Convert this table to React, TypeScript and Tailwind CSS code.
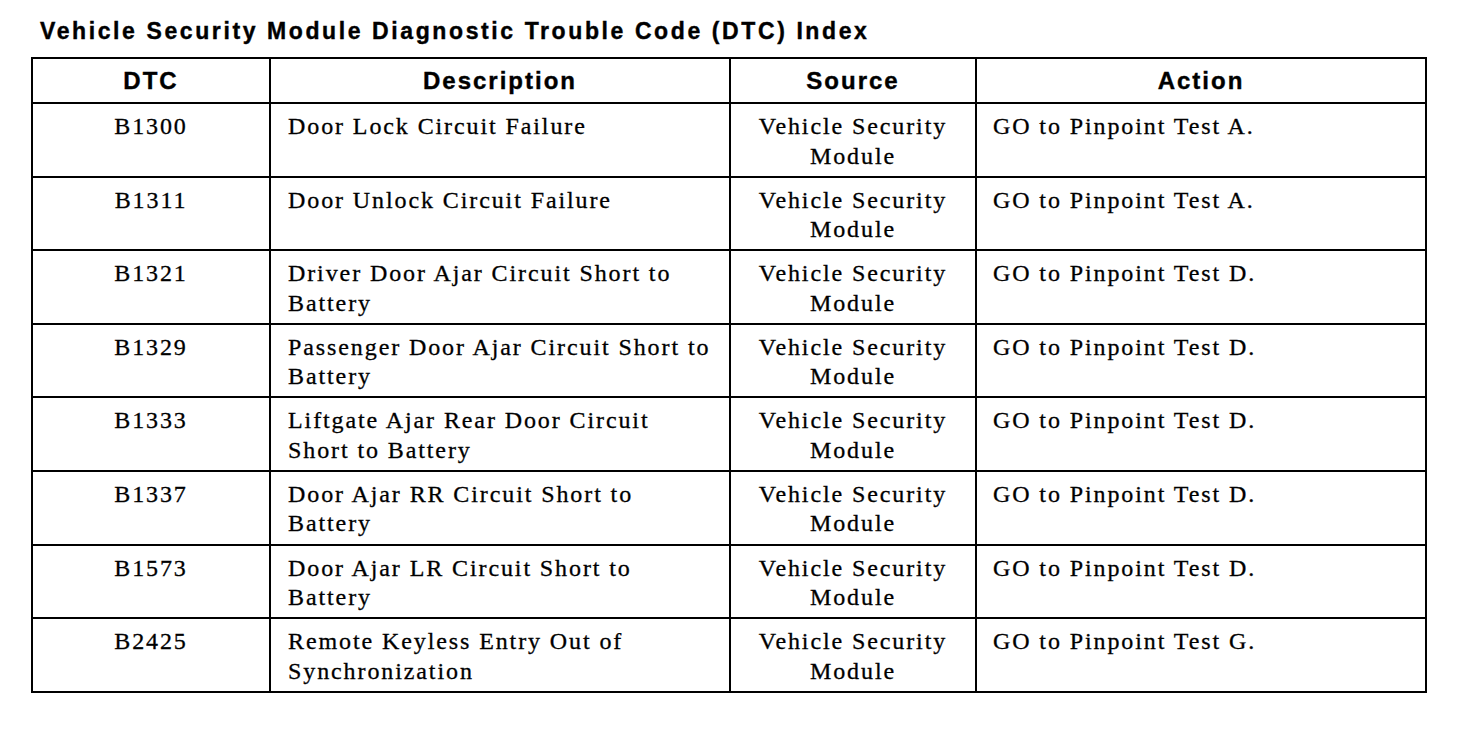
const rows = [
  { code: "B1300", desc: ["Door Lock Circuit Failure"], test: "A" },
  { code: "B1311", desc: ["Door Unlock Circuit Failure"], test: "A" },
  { code: "B1321", desc: ["Driver Door Ajar Circuit Short to", "Battery"], test: "D" },
  { code: "B1329", desc: ["Passenger Door Ajar Circuit Short to", "Battery"], test: "D" },
  { code: "B1333", desc: ["Liftgate Ajar Rear Door Circuit", "Short to Battery"], test: "D" },
  { code: "B1337", desc: ["Door Ajar RR Circuit Short to", "Battery"], test: "D" },
  { code: "B1573", desc: ["Door Ajar LR Circuit Short to", "Battery"], test: "D" },
  { code: "B2425", desc: ["Remote Keyless Entry Out of", "Synchronization"], test: "G" },
];

const cols = "grid grid-cols-[238px_460px_246px_450px]";
const cell = "border-r-2 border-b-2 border-black";

export default function App() {
  return (
    <div className="w-[1472px] h-[730px] bg-white text-black overflow-hidden">
      <h1 className="ml-[40px] pt-[17px] mb-[12px] leading-[28px] text-[23px] font-bold tracking-[2.6px] font-['Liberation_Sans',Arial,sans-serif] whitespace-nowrap [-webkit-text-stroke:0.4px_black]">
        Vehicle Security Module Diagnostic Trouble Code (DTC) Index
      </h1>

      <div className="ml-[31px] w-[1396px] border-t-2 border-l-2 border-black">
        {/* header */}
        <div className={`${cols} h-[45px] text-[24px] font-bold tracking-[2px] font-['Liberation_Sans',Arial,sans-serif] [-webkit-text-stroke:0.4px_black]`}>
          {["DTC", "Description", "Source", "Action"].map((h) => (
            <div key={h} className={`${cell} flex items-center justify-center`}>
              {h}
            </div>
          ))}
        </div>

        {rows.map((r) => (
          <div
            key={r.code}
            className={`${cols} h-[73.6px] text-[24px] leading-[29.5px] tracking-[1.9px] font-['Liberation_Serif','Times_New_Roman',serif] whitespace-nowrap [-webkit-text-stroke:0.3px_black]`}
          >
            <div className={`${cell} pt-[8px] text-center`}>{r.code}</div>
            <div className={`${cell} pt-[8px] pl-[17px]`}>
              {r.desc.map((line) => (
                <div key={line}>{line}</div>
              ))}
            </div>
            <div className={`${cell} pt-[8px] text-center`}>
              <div>Vehicle Security</div>
              <div>Module</div>
            </div>
            <div className={`${cell} pt-[8px] pl-[16px]`}>GO to Pinpoint Test {r.test}.</div>
          </div>
        ))}
      </div>
    </div>
  );
}
